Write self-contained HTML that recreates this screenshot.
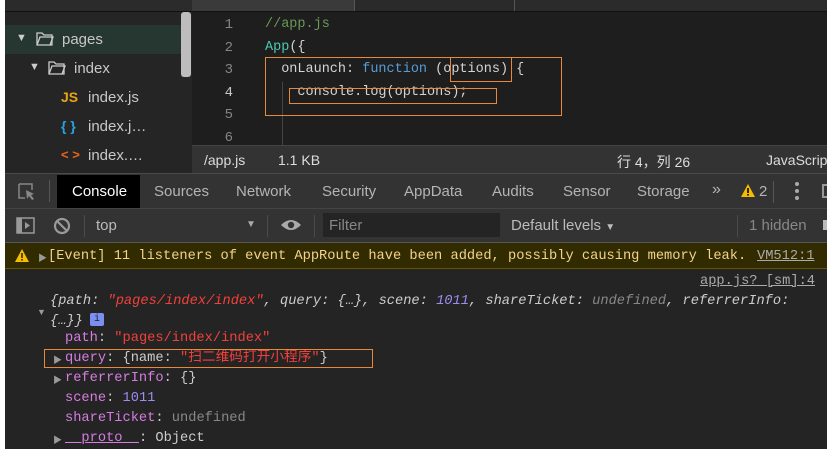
<!DOCTYPE html>
<html><head><meta charset="utf-8"><style>
*{margin:0;padding:0;box-sizing:border-box}
body{width:827px;height:449px;overflow:hidden;background:#fff;position:relative;font-family:"Liberation Sans","Noto Sans CJK SC",sans-serif}
.a{position:absolute;white-space:pre}
.m{font-family:"Liberation Mono","Noto Sans CJK SC",monospace}
.ob{position:absolute;border:1px solid #e8883a}
</style></head><body>
<!-- top tab bar -->
<div class="a" style="left:5px;top:0;width:822px;height:12px;background:#2b2b2b;border-bottom:1px solid #111"></div>
<div class="a" style="left:192px;top:0;width:163px;height:11px;background:#3a3a3a;border-right:1px solid #555"></div>
<div class="a" style="left:355px;top:0;width:160px;height:11px;background:#2a2a2a;border-right:1px solid #555"></div>
<!-- sidebar -->
<div class="a" style="left:5px;top:12px;width:187px;height:161px;background:#252526"></div>
<div class="a" style="left:5px;top:25px;width:176px;height:29px;background:#263631"></div>
<div class="a" style="left:181px;top:12px;width:10px;height:65px;background:#bdbdbd;border-radius:3px"></div>
<div class="a" style="left:16px;top:32px;color:#ccc;font-size:11px">▼</div>
<svg class="a" style="left:36px;top:31px" width="18" height="16"><path d="M1 2h5l2 2h8v10H1z" fill="none" stroke="#ccc" stroke-width="1.3"/><path d="M1 14l3-8h13l-3 8" fill="none" stroke="#ccc" stroke-width="1.3"/></svg>
<div class="a" style="left:62px;top:31px;color:#c8c8c8;font-size:15px">pages</div>
<div class="a" style="left:29px;top:61px;color:#ccc;font-size:11px">▼</div>
<svg class="a" style="left:48px;top:60px" width="18" height="16"><path d="M1 2h5l2 2h8v10H1z" fill="none" stroke="#ccc" stroke-width="1.3"/><path d="M1 14l3-8h13l-3 8" fill="none" stroke="#ccc" stroke-width="1.3"/></svg>
<div class="a" style="left:74px;top:60px;color:#c8c8c8;font-size:15px">index</div>
<div class="a" style="left:61px;top:89px;color:#e8a317;font-size:14px;font-weight:bold">JS</div>
<div class="a" style="left:88px;top:89px;color:#c8c8c8;font-size:15px">index.js</div>
<div class="a" style="left:61px;top:118px;color:#29a3e0;font-size:14px;font-weight:bold">{ }</div>
<div class="a" style="left:88px;top:118px;color:#c8c8c8;font-size:15px">index.j…</div>
<div class="a" style="left:61px;top:147px;color:#e8661c;font-size:13px;font-weight:bold">&lt; &gt;</div>
<div class="a" style="left:88px;top:147px;color:#c8c8c8;font-size:15px">index.…</div>
<!-- editor -->
<div class="a" style="left:192px;top:12px;width:635px;height:133px;background:#1e1e1e"></div>
<div class="a m" style="left:218px;top:14px;color:#858585;font-size:14px;line-height:22.5px;text-align:right;width:15px">1
2
3
<span style="color:#c6c6c6">4</span>
5
6</div>
<div class="a" style="left:282px;top:82px;width:1px;height:63px;background:#444"></div>
<div class="a m" style="left:265px;top:14px;color:#d4d4d4;font-size:13.5px;line-height:22.5px"><span style="color:#6a9955">//app.js</span>
<span style="color:#4ec9b0">App</span>({
  onLaunch: <span style="color:#569cd6">function</span> (options) {
    console.log(options);</div>
<div class="ob" style="left:265px;top:57px;width:297px;height:59px"></div>
<div class="ob" style="left:450px;top:57px;width:62px;height:25px"></div>
<div class="ob" style="left:289px;top:88px;width:208px;height:16px"></div>
<!-- status bar -->
<div class="a" style="left:192px;top:145px;width:635px;height:28px;background:#333;border-top:1px solid #444"></div>
<div class="a" style="left:204px;top:152px;color:#ddd;font-size:14px">/app.js</div>
<div class="a" style="left:278px;top:152px;color:#ddd;font-size:14px">1.1 KB</div>
<div class="a" style="left:617px;top:152px;color:#ddd;font-size:14px">行 4，列 26</div>
<div class="a" style="left:766px;top:152px;color:#ddd;font-size:14px">JavaScrip</div>
<!-- devtools tabs -->
<div class="a" style="left:5px;top:173px;width:822px;height:36px;background:#333;border-top:1px solid #4a4a4a;border-bottom:1px solid #444"></div>
<svg class="a" style="left:18px;top:183px" width="18" height="18"><path d="M1 1h13v6M1 1v14h6" fill="none" stroke="#888" stroke-width="1.5"/><path d="M8 7l8 4-3 1 3 4-2 1-3-4-2 3z" fill="#888"/></svg>
<div class="a" style="left:49px;top:180px;width:1px;height:22px;background:#555"></div>
<div class="a" style="left:57px;top:175px;width:83px;height:33px;background:#000"></div>
<div class="a" style="left:72px;top:183px;color:#fff;font-size:15px">Console</div>
<div class="a" style="left:154px;top:183px;color:#b4b4b4;font-size:15px">Sources</div>
<div class="a" style="left:236px;top:183px;color:#b4b4b4;font-size:15px">Network</div>
<div class="a" style="left:322px;top:183px;color:#b4b4b4;font-size:15px">Security</div>
<div class="a" style="left:404px;top:183px;color:#b4b4b4;font-size:15px">AppData</div>
<div class="a" style="left:492px;top:183px;color:#b4b4b4;font-size:15px">Audits</div>
<div class="a" style="left:563px;top:183px;color:#b4b4b4;font-size:15px">Sensor</div>
<div class="a" style="left:637px;top:183px;color:#b4b4b4;font-size:15px">Storage</div>
<div class="a" style="left:712px;top:181px;color:#b4b4b4;font-size:16px">»</div>
<svg class="a" style="left:741px;top:184px" width="14" height="13"><path d="M7 0L14 13H0z" fill="#f4bd00"/><rect x="6.2" y="4" width="1.6" height="5" fill="#000"/><rect x="6.2" y="10" width="1.6" height="1.6" fill="#000"/></svg>
<div class="a" style="left:759px;top:183px;color:#b4b4b4;font-size:15px">2</div>
<div class="a" style="left:773px;top:181px;width:1px;height:22px;background:#555"></div>
<div class="a" style="left:795px;top:182px;width:4px;height:4px;background:#aaa;border-radius:2px"></div>
<div class="a" style="left:795px;top:189px;width:4px;height:4px;background:#aaa;border-radius:2px"></div>
<div class="a" style="left:795px;top:196px;width:4px;height:4px;background:#aaa;border-radius:2px"></div>
<div class="a" style="left:822px;top:184px;width:5px;height:14px;border:2px solid #999;border-right:none"></div>
<!-- toolbar -->
<div class="a" style="left:5px;top:209px;width:822px;height:34px;background:#333;border-bottom:1px solid #555"></div>
<svg class="a" style="left:16px;top:217px" width="20" height="18"><rect x="1" y="1" width="17" height="15" fill="none" stroke="#999" stroke-width="1.5"/><rect x="1" y="1" width="5" height="15" fill="#999"/><path d="M9 5l5 3.5-5 3.5z" fill="#999"/></svg>
<svg class="a" style="left:53px;top:217px" width="18" height="18"><circle cx="9" cy="9" r="7" fill="none" stroke="#999" stroke-width="2.2"/><path d="M4 4l10 10" stroke="#999" stroke-width="2.2"/></svg>
<div class="a" style="left:84px;top:215px;width:1px;height:22px;background:#4a4a4a"></div>
<div class="a" style="left:96px;top:217px;color:#bbb;font-size:15px">top</div>
<div class="a" style="left:246px;top:219px;color:#aaa;font-size:10px">▼</div>
<div class="a" style="left:267px;top:215px;width:1px;height:22px;background:#4a4a4a"></div>
<svg class="a" style="left:280px;top:218px" width="22" height="14"><path d="M1 7Q11 -3 21 7Q11 17 1 7z" fill="#aaa"/><circle cx="11" cy="7" r="3.2" fill="#333"/></svg>
<div class="a" style="left:314px;top:215px;width:1px;height:22px;background:#4a4a4a"></div>
<div class="a" style="left:323px;top:213px;width:177px;height:24px;background:#242424"></div>
<div class="a" style="left:329px;top:217px;color:#888;font-size:15px">Filter</div>
<div class="a" style="left:511px;top:217px;color:#bbb;font-size:15px">Default levels <span style="font-size:10px">▼</span></div>
<div class="a" style="left:737px;top:215px;width:1px;height:22px;background:#4a4a4a"></div>
<div class="a" style="left:749px;top:217px;color:#888;font-size:15px">1 hidden</div>
<div class="a" style="left:823px;top:220px;width:4px;height:10px;background:#bbb"></div>
<!-- warning -->
<div class="a" style="left:5px;top:243px;width:822px;height:26px;background:#332b00;border-bottom:1px solid #665500"></div>
<svg class="a" style="left:15px;top:249px" width="14" height="13"><path d="M7 0L14 13H0z" fill="#f4bd00"/><rect x="6.2" y="4" width="1.6" height="5" fill="#332b00"/><rect x="6.2" y="10" width="1.6" height="1.6" fill="#332b00"/></svg>
<div class="a" style="left:38px;top:251px;color:#999;font-size:9px">▶</div>
<div class="a m" style="left:48px;top:249px;color:#f2d38e;font-size:13.7px">[Event] 11 listeners of event AppRoute have been added, possibly causing memory leak.</div>
<div class="a m" style="left:757px;top:249px;color:#aaa;font-size:13.7px;text-decoration:underline">VM512:1</div>
<!-- console -->
<div class="a" style="left:5px;top:269px;width:822px;height:180px;background:#242424"></div>
<div class="a m" style="left:700px;top:274px;color:#aaa;font-size:13.7px;text-decoration:underline">app.js? [sm]:4</div>
<div class="a" style="left:37px;top:307px;color:#999;font-size:9px">▼</div>
<div class="a m" style="left:50px;top:292px;color:#ccc;font-size:13.7px;font-style:italic;line-height:20px">{path: <span style="color:#f2403b">"pages/index/index"</span>, query: {…}, scene: <span style="color:#9b8df2">1011</span>, shareTicket: <span style="color:#888">undefined</span>, referrerInfo:
{…}}</div>
<div class="a" style="left:90px;top:313px;width:14px;height:13px;background:#7b8ff2;border-radius:2px;color:#222;font-size:10px;text-align:center;line-height:13px;font-family:'Liberation Mono',monospace">i</div>
<div class="a m" style="left:65px;top:329px;color:#ccc;font-size:13.7px;line-height:20px"><span style="color:#d67de0">path</span>: <span style="color:#f2403b">"pages/index/index"</span>
<span style="color:#d67de0">query</span>: {name: <span style="color:#f2403b">"扫二维码打开小程序"</span>}
<span style="color:#d67de0">referrerInfo</span>: {}
<span style="color:#d67de0">scene</span>: <span style="color:#9b8df2">1011</span>
<span style="color:#d67de0">shareTicket</span>: <span style="color:#888">undefined</span>
<span style="color:#d67de0;text-decoration:underline">__proto__</span>: Object</div>
<div class="a" style="left:53px;top:353px;color:#999;font-size:9px">▶</div>
<div class="a" style="left:53px;top:373px;color:#999;font-size:9px">▶</div>
<div class="a" style="left:53px;top:433px;color:#999;font-size:9px">▶</div>
<div class="ob" style="left:44px;top:349px;width:329px;height:19px"></div>
</body></html>
